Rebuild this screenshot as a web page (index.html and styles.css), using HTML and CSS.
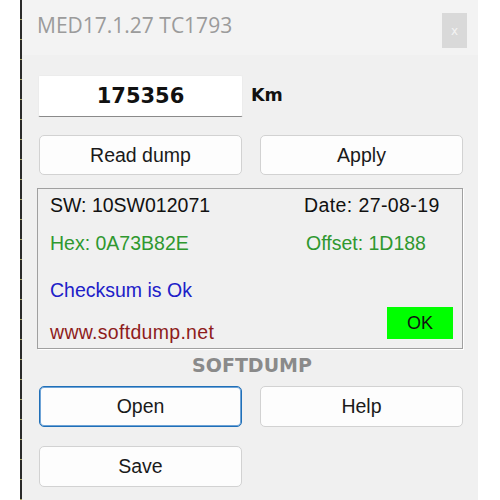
FILE: index.html
```html
<!DOCTYPE html>
<html>
<head>
<meta charset="utf-8">
<link rel="stylesheet" href="styles.css">
</head>
<body>
<div class="window">
  <div class="edge"></div>
  <div class="main">
    <div class="titlebar">
      <span class="title">MED17.1.27 TC1793</span>
      <span class="close">x</span>
    </div>
    <div class="content">
      <div class="km-row">
        <div class="km-input">175356</div>
        <span class="km-label">Km</span>
      </div>
      <div class="btn-row first">
        <button class="btn">Read dump</button>
        <button class="btn">Apply</button>
      </div>
      <div class="group">
        <div class="row r1"><span>SW: 10SW012071</span><span class="date">Date: 27-08-19</span></div>
        <div class="row r2 green"><span>Hex: 0A73B82E</span><span class="offset">Offset: 1D188</span></div>
        <div class="row r3 blue">Checksum is Ok</div>
        <div class="row r4"><span class="url">www.softdump.net</span><span class="ok">OK</span></div>
      </div>
      <div class="brand">SOFTDUMP</div>
      <div class="btn-row second">
        <button class="btn tall focused">Open</button>
        <button class="btn tall">Help</button>
      </div>
      <div class="btn-row third">
        <button class="btn tall">Save</button>
      </div>
    </div>
  </div>
</div>
</body>
</html>
```
FILE: styles.css
```css
html, body {
  margin: 0;
  padding: 0;
  background: #ffffff;
}
body {
  font-family: "Liberation Sans", Arial, sans-serif;
}
.window {
  margin-left: 20px;
  width: 458px;
  height: 500px;
  display: flex;
}
.edge {
  width: 2px;
  background: repeating-linear-gradient(to bottom, #2a2a2a 0, #2a2a2a 19px, #a8a866 19px, #a8a866 20px);
}
.main {
  flex: 1;
  display: flex;
  flex-direction: column;
  background: #f0f0f0;
}
.titlebar {
  height: 55px;
  box-sizing: border-box;
  background: #f3f3f3;
  padding: 13px 11px 0 15px;
  display: flex;
  justify-content: space-between;
  align-items: flex-start;
}
.title {
  font-family: "Open Sans", sans-serif;
  font-size: 21px;
  line-height: 30px;
  margin-top: -3px;
  color: #9b9b9b;
}
.close {
  width: 25px;
  height: 35px;
  background: #d9d9d9;
  color: #f4f4f4;
  font-family: "DejaVu Sans", sans-serif;
  font-size: 12px;
  display: flex;
  align-items: center;
  justify-content: center;
}
.content {
  padding: 0 15px;
  display: flex;
  flex-direction: column;
}
.km-row {
  margin-top: 20px;
  display: flex;
  align-items: center;
}
.km-input {
  margin-left: 1px;
  width: 205px;
  height: 42px;
  box-sizing: border-box;
  background: #ffffff;
  border: 1px solid #ececec;
  border-bottom: 1px solid #8a8a8a;
  border-radius: 2px;
  display: flex;
  align-items: center;
  justify-content: center;
  font-family: "DejaVu Sans", sans-serif;
  font-weight: bold;
  font-size: 21px;
  color: #111;
}
.km-label {
  margin-left: 8px;
  margin-top: -3px;
  font-family: "DejaVu Sans", sans-serif;
  font-weight: bold;
  font-size: 17.5px;
  color: #111;
}
.btn-row {
  display: grid;
  grid-template-columns: 203px 203px;
  column-gap: 18px;
  padding-left: 2px;
}
.btn-row.first { margin-top: 18px; }
.btn-row.third { margin-top: 19px; }
.btn {
  height: 40px;
  box-sizing: border-box;
  padding: 0;
  margin: 0;
  background: #fdfdfd;
  border: 1px solid #d2d2d2;
  border-radius: 5px;
  font-family: "Liberation Sans", Arial, sans-serif;
  font-size: 19.5px;
  color: #1a1a1a;
}
.btn.tall { height: 41px; }
.btn.focused {
  border: 1px solid #1f6fb8;
  box-shadow: inset 0 0 0 1px #6ea3d6;
}
.group {
  margin-top: 13px;
  border: 1px solid #a0a0a0;
  box-shadow: 1px 1px 0 #ffffff;
  padding: 3px 9px 9px 12px;
  display: flex;
  flex-direction: column;
  font-size: 19.5px;
  color: #111;
}
.row {
  line-height: 26px;
  height: 26px;
}
.r1, .r2 {
  display: grid;
  grid-template-columns: 254px auto;
}
.date { letter-spacing: 0.4px; }
.r2 { margin-top: 12px; }
.r3 { margin-top: 21px; }
.offset { padding-left: 2px; }
.green { color: #2f982f; }
.blue { color: #2020c8; }
.r4 {
  margin-top: 4px;
  height: 32px;
  display: flex;
  justify-content: space-between;
  align-items: flex-end;
}
.url {
  color: #8e1c1c;
  line-height: 26px;
  margin-bottom: -6px;
  letter-spacing: 0.3px;
}
.ok {
  width: 66px;
  height: 32px;
  background: #00ff00;
  color: #111;
  font-size: 18px;
  display: flex;
  align-items: center;
  justify-content: center;
}
.brand {
  height: 37px;
  line-height: 33px;
  text-align: center;
  font-family: "DejaVu Sans", sans-serif;
  font-weight: bold;
  font-size: 19px;
  color: #8a8a8a;
  padding-left: 4px;
  box-sizing: border-box;
}
```
